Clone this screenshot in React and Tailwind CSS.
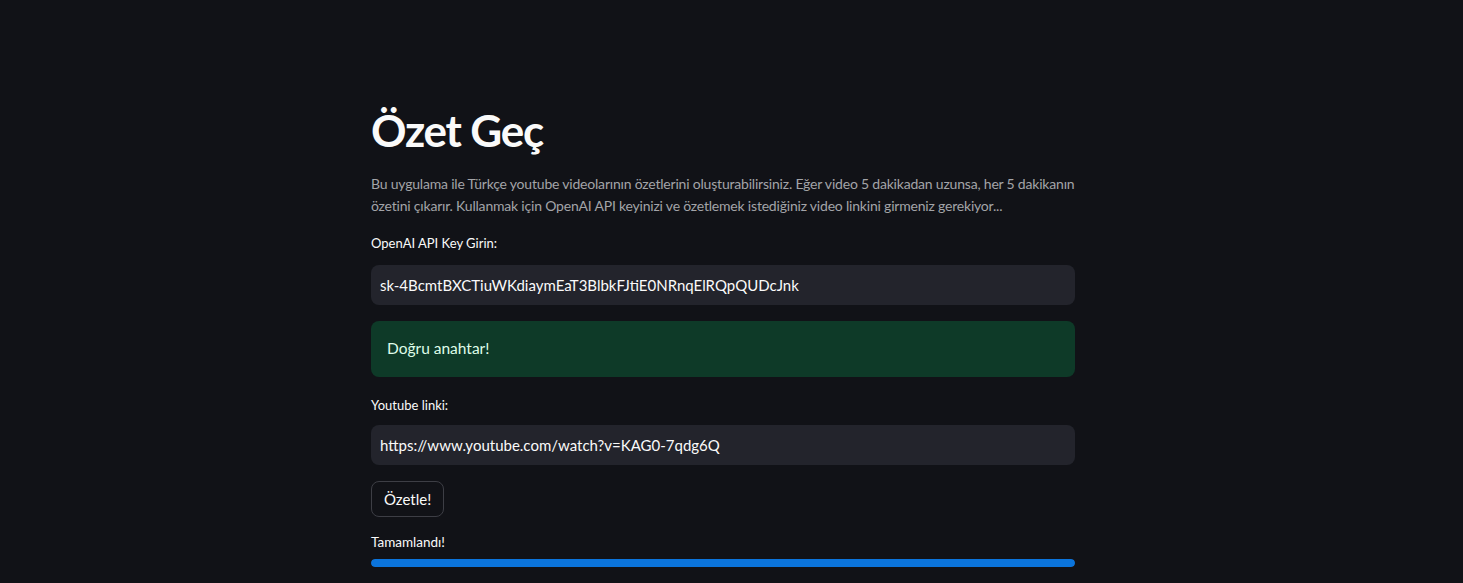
import { useState } from 'react';

const App = () => {
    const [apiKey, setApiKey] = useState("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")
    const [link, setLink] = useState("https://www.youtube.com/watch?v=KAG0-7qdg6Q")
    const progress = 100

    return (<div className="min-h-screen bg-[#111217] font-['Source_Sans_Pro','Lato',sans-serif] text-[#fafafa] pr-[17px]">
        <div className="mx-auto w-[704px] pt-[104px] flex flex-col">
            <h1 className="text-[44px] leading-[52px] font-bold tracking-[-1.2px]">Özet Geç</h1>

            <p className="mt-[17px] text-[14px] leading-[22px] text-[#a3a4a8] tracking-[-0.2px]">
                Bu uygulama ile Türkçe youtube videolarının özetlerini oluşturabilirsiniz. Eğer video 5 dakikadan uzunsa, her 5 dakikanın<br />
                özetini çıkarır. Kullanmak için OpenAI API keyinizi ve özetlemek istediğiniz video linkini girmeniz gerekiyor...
            </p>

            <div className="mt-[18px] flex flex-col gap-[14px]">
                <label className="text-[13px] leading-[16px]">OpenAI API Key Girin:</label>
                <input value={apiKey} onChange={(e)=>setApiKey(e.target.value)} type="text"
                    className="h-[40px] w-full rounded-lg bg-[#23242c] px-[9px] text-[15px] text-[#fafafa] outline-none" />
            </div>

            <div className="mt-[16px] h-[56px] rounded-lg bg-[#0e3a28] px-[16px] flex items-center text-[15.5px] text-[#dffde9]">
                Doğru anahtar!
            </div>

            <div className="mt-[20px] flex flex-col gap-[12px]">
                <label className="text-[13px] leading-[16px]">Youtube linki:</label>
                <input value={link} onChange={(e)=>setLink(e.target.value)} type="text"
                    className="h-[40px] w-full rounded-lg bg-[#23242c] px-[9px] text-[15px] text-[#fafafa] outline-none" />
            </div>

            <div className="mt-[16px]">
                <button className="h-[36px] rounded-lg border border-[#3d3e45] bg-[#111217] px-[12px] text-[15px] text-[#fafafa]">Özetle!</button>
            </div>

            <div className="mt-[17px] flex flex-col gap-[9px]">
                <div className="text-[13.5px] leading-[16px]">Tamamlandı!</div>
                <div className="h-[8px] w-full rounded-full bg-[#23242c] overflow-hidden">
                    <div className="h-full rounded-full bg-[#0b74dc]" style={{ width: `${progress}%` }}></div>
                </div>
            </div>
        </div>
    </div>)
}

export default App
